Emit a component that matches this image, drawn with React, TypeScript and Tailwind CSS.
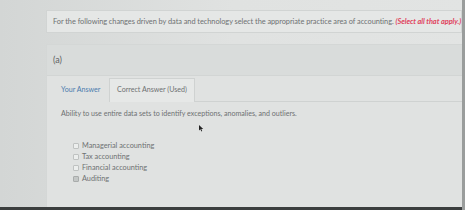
import React from 'react'

const OPTIONS = [
  { label: 'Managerial accounting', checked: false },
  { label: 'Tax accounting', checked: false },
  { label: 'Financial accounting', checked: false },
  { label: 'Auditing', checked: true },
]

function Box({ checked }: { checked: boolean }) {
  return (
    <span
      className={
        'w-[6px] h-[6px] rounded-[1px] border ' +
        (checked ? 'border-[#a9acab] bg-[#c4c7c6]' : 'border-[#bfc2c1] bg-[#eceeed]')
      }
    />
  )
}

export default function App() {
  return (
    <div
      className="relative w-[465px] h-[210px] overflow-hidden bg-gradient-to-r from-[#d3d6d5] via-[#e0e2e1] to-[#e2e4e3] text-[#6e7172]"
      style={{ fontFamily: 'Lato, "Open Sans", sans-serif' }}
    >
      <div className="flex flex-col pl-[46px] pr-[3px] pt-[10px] h-[207px]">
        {/* Question */}
        <div className="h-[23px] border border-[#d1d4d3] bg-[#e5e7e6] flex items-center pl-[6px] text-[7.4px] whitespace-nowrap tracking-[-0.05px]">
          <span>For the following changes driven by data and technology select the appropriate practice area of accounting.&nbsp;</span>
          <span className="text-[#e0455f] italic font-bold">(Select all that apply.)</span>
        </div>

        {/* Part panel */}
        <div className="mt-[11px] flex-1 flex flex-col border-l border-t border-[#d4d7d6]">
          <div className="h-[30px] bg-[#d9dcdb] flex items-center pl-[6px] text-[9px] text-[#5f6263]">(a)</div>
          <div className="flex-1 bg-[#e0e2e1] border-t border-[#d2d5d4] pl-[14px] relative">
            <div className="flex items-end h-[26px]">
              <div className="w-[48px] h-[24px] flex items-center text-[7.1px] text-[#4b7cae]">Your Answer</div>
              <div className="w-[86px] h-[24px] border border-b-0 border-[#cfd2d1] bg-[#e6e8e7] flex items-center justify-center text-[7.1px] whitespace-nowrap">
                Correct Answer (Used)
              </div>
              <div className="flex-1 border-b border-[#cfd2d1]" />
            </div>
            <div className="mt-[7px] text-[7.1px] whitespace-nowrap">
              Ability to use entire data sets to identify exceptions, anomalies, and outliers.
            </div>
            <div className="mt-[22px] ml-[12px] flex flex-col gap-[2px]">
              {OPTIONS.map(o => (
                <div key={o.label} className="flex items-center gap-[3px] h-[9px] text-[7.3px] whitespace-nowrap">
                  <Box checked={o.checked} />
                  <span>{o.label}</span>
                </div>
              ))}
            </div>
            {/* mouse cursor */}
            <svg className="absolute left-[152px] top-[49px]" width="5" height="7" viewBox="0 0 5 7">
              <path d="M0 0 L0 5.5 L1.4 4.3 L2.4 6.5 L3.2 6.1 L2.3 4 L4.2 4 Z" fill="#222" />
            </svg>
          </div>
        </div>
      </div>
      <div className="absolute right-0 top-0 w-[3px] h-full bg-[#9a9d9c]" />
      <div className="h-[3px] bg-[#3b3e3e]" />
    </div>
  )
}
